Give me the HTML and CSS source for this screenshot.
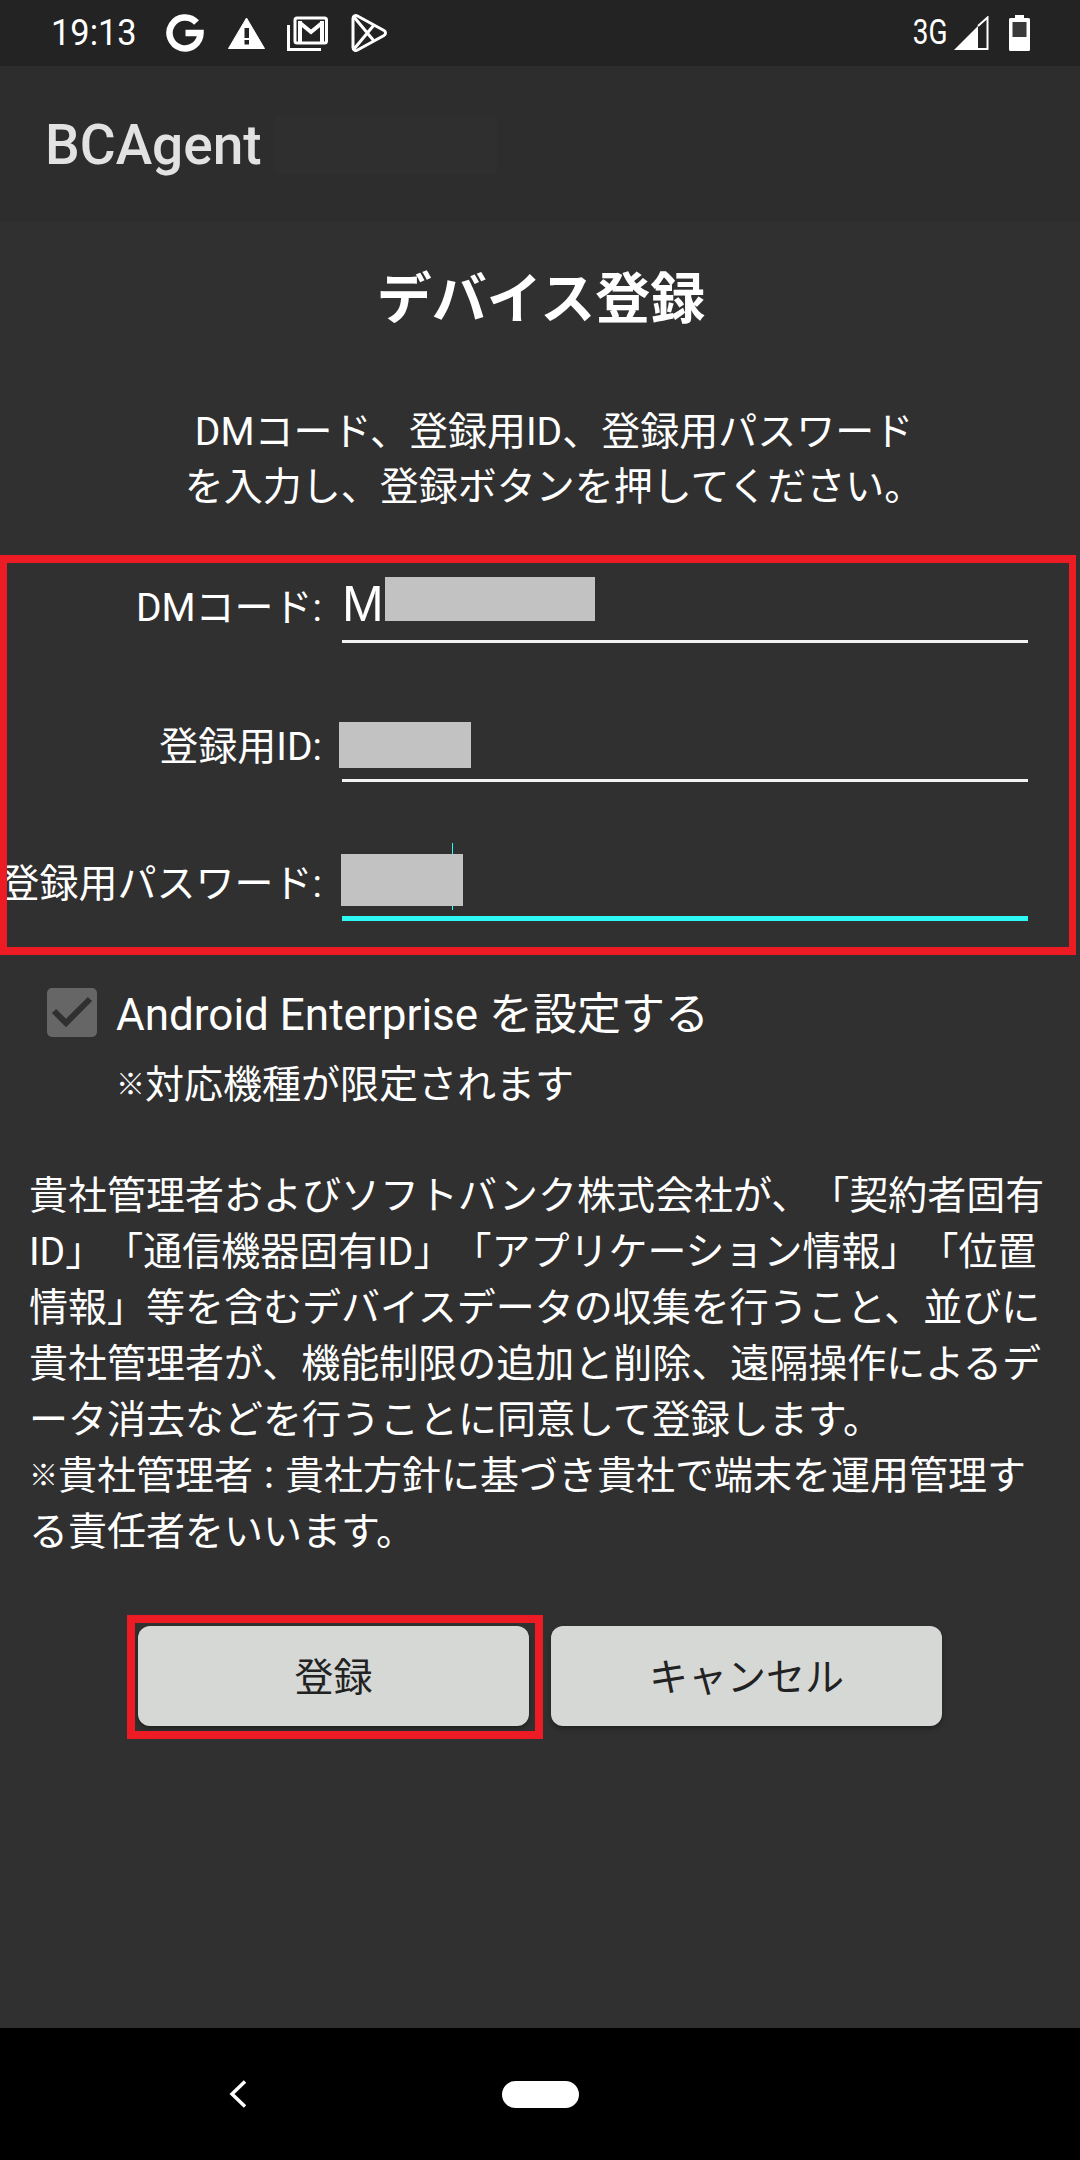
FILE: index.html

```html
<!DOCTYPE html>
<html lang="ja">
<head>
  <meta charset="UTF-8" />
  <title>BCAgent</title>
  <link rel="stylesheet" href="styles.css">
</head>
<body>
  <div class="status-bar">
    <span class="clock">19:13</span>
    <div class="notify-icons">
      <svg class="icon-g" viewBox="0 0 38 38"><path d="M30.500 8.500A15.500 15.500 0 1 0 34.500 19H19.500" fill="none" stroke="#fff" stroke-width="6.500"/></svg>
      <svg class="icon-warn" viewBox="0 0 37 32"><path d="M18.500 1 36.500 31.500H.5z" fill="#fff" stroke="#fff" stroke-linejoin="round"/><rect x="16.500" y="11" width="4.500" height="10" fill="#232323"/><rect x="16.500" y="23" width="4.500" height="4.500" fill="#232323"/></svg>
      <svg class="icon-mail" viewBox="0 0 41 35"><path d="M1.500 9v24.500H34" fill="none" stroke="#fff" stroke-width="3"/><rect x="8" y="2" width="31.500" height="25" rx="2" fill="none" stroke="#fff" stroke-width="3"/><path d="M13 5v21M35 5v21M13 7l11 9 11-9" fill="none" stroke="#fff" stroke-width="4"/></svg>
      <svg class="icon-play" viewBox="0 0 36 38"><path d="M2 4.500C2 2 4.500 1 6.500 2L33 16.500c2 1.100 2 3.900 0 5L6.500 36C4.500 37 2 36 2 33.500z" fill="none" stroke="#fff" stroke-width="3" stroke-linejoin="round"/><path d="M3 3l20 24M3 35L23 11" fill="none" stroke="#fff" stroke-width="3"/></svg>
    </div>
    <div class="system-icons">
      <span class="net-type">3G</span>
      <svg class="icon-signal" viewBox="0 0 35 34"><path d="M0 34 24 10V34z" fill="#fff"/><path d="M24 10 33.500 1.500V33H24" fill="none" stroke="#fff" stroke-width="2"/></svg>
      <svg class="icon-battery" viewBox="0 0 21 36"><path d="M6 0h9v3h4.500a1.500 1.500 0 0 1 1.500 1.500V34.500a1.500 1.500 0 0 1-1.500 1.500H1.500A1.500 1.500 0 0 1 0 34.500V4.500A1.500 1.500 0 0 1 1.500 3H6z" fill="#fff"/><rect x="3.500" y="7" width="14" height="15" fill="#3a3a3a"/></svg>
    </div>
  </div>

  <div class="app-bar">
    <span class="app-name">BCAgent</span>
    <span class="app-ghost"></span>
  </div>

  <div class="content">
    <h1 class="title">デバイス登録</h1>
    <p class="lead">DMコード、登録用ID、登録用パスワード<br>を入力し、登録ボタンを押してください。</p>

    <div class="form-box">
      <div class="field">
        <label>DMコード:</label>
        <div class="input"><span class="input-value">M</span><span class="mask mask-code"></span></div>
      </div>
      <div class="field">
        <label>登録用ID:</label>
        <div class="input"><span class="mask mask-id"></span></div>
      </div>
      <div class="field field-last">
        <label>登録用パスワード:</label>
        <div class="input input-focus"><span class="caret"></span><span class="mask mask-pass"></span></div>
      </div>
    </div>

    <div class="check-row">
      <span class="checkbox">
        <svg viewBox="0 0 50 49"><path d="M7 23 19 35 43 11" fill="none" stroke="#303030" stroke-width="6"/></svg>
      </span>
      <span class="check-label">Android Enterprise を設定する</span>
    </div>
    <p class="check-note"><span class="ref-mark">※</span>対応機種が限定されます</p>

    <p class="terms">貴社管理者およびソフトバンク株式会社が、「契約者固有ID」「通信機器固有ID」「アプリケーション情報」「位置情報」等を含むデバイスデータの収集を行うこと、並びに貴社管理者が、機能制限の追加と削除、遠隔操作によるデータ消去などを行うことに同意して登録します。<br><span class="ref-mark">※</span>貴社管理者<span class="small-colon">：</span>貴社方針に基づき貴社で端末を運用管理する責任者をいいます。</p>

    <div class="actions">
      <button class="btn btn-marked">登録</button>
      <button class="btn">キャンセル</button>
    </div>
  </div>

  <div class="nav-bar">
    <svg class="nav-back" viewBox="0 0 18 28"><path d="M16 1.500 3 14l13 12.500" fill="none" stroke="#fff" stroke-width="3.500"/></svg>
    <span class="nav-home"></span>
  </div>
</body>
</html>
```

FILE: styles.css

```css
* {
  box-sizing: border-box;
}
html, body {
  margin: 0;
  height: 2160px;
}
body {
  display: flex;
  flex-direction: column;
  background: #303030;
  color: #fff;
  font-family: Roboto, "Noto Sans CJK JP", sans-serif;
  text-spacing-trim: space-all;
  overflow: hidden;
}

/* status bar */
.status-bar {
  height: 66px;
  background: #232323;
  display: flex;
  align-items: center;
  padding: 0 50px 0 51px;
}
.clock {
  font-size: 37px;
  line-height: 66px;
  width: 115px;
  transform: scaleX(0.93);
  transform-origin: left center;
}
.notify-icons {
  display: flex;
  align-items: center;
  flex: 1;
}
.notify-icons svg {
  display: block;
}
.icon-g {
  width: 38px;
  height: 38px;
  margin-right: 24px;
}
.icon-warn {
  width: 37px;
  height: 32px;
  margin-right: 22px;
}
.icon-mail {
  width: 41px;
  height: 35px;
  margin-right: 23px;
}
.icon-play {
  width: 36px;
  height: 38px;
}
.system-icons {
  display: flex;
  align-items: center;
}
.net-type {
  font-size: 35px;
  line-height: 66px;
  transform: scaleX(0.8);
  transform-origin: right center;
  margin-right: 6px;
}
.icon-signal {
  width: 35px;
  height: 34px;
  margin-right: 20px;
}
.icon-battery {
  width: 21px;
  height: 36px;
}

/* app bar */
.app-bar {
  height: 156px;
  background: #2d2d2d;
  display: flex;
  align-items: center;
  padding: 2px 0 0 45px;
}
.app-name {
  font-weight: 500;
  font-size: 55px;
  color: #e2e2e2;
  width: 230px;
}
.app-ghost {
  width: 222px;
  height: 57px;
  background: #2f2f2f;
}

/* main */
.content {
  flex: 1;
  position: relative;
}
.title {
  margin: 0;
  height: 154px;
  padding-left: 2px;
  font-size: 55px;
  line-height: 154px;
  font-weight: 700;
  text-align: center;
}
.lead {
  margin: 29px 0 0;
  padding-left: 28px;
  font-size: 39px;
  line-height: 55px;
  text-align: center;
}

.form-box {
  position: relative;
  width: 1076px;
  height: 400px;
  margin-top: 40px;
}
.form-box::after {
  content: "";
  position: absolute;
  inset: 0;
  border-style: solid;
  border-color: #ed1c24;
  border-width: 8px 7px;
}
.field {
  display: flex;
  height: 139px;
}
.field:first-child {
  height: 88px;
}
.field label {
  width: 322px;
  flex: none;
  align-self: flex-end;
  display: flex;
  justify-content: flex-end;
  font-size: 39px;
  line-height: 52px;
  white-space: nowrap;
  margin-bottom: 9px;
}
.field-last label {
  margin-bottom: 11px;
}
.input {
  position: relative;
  margin-left: 20px;
  width: 686px;
  border-bottom: 3px solid #f2f2f2;
  align-self: flex-end;
  height: 70px;
}
.input-focus {
  border-bottom: 5px solid #2cf8f4;
}
.input-value {
  position: absolute;
  left: 0;
  top: -2px;
  font-family: "Liberation Sans", sans-serif;
  font-size: 50px;
  line-height: 66px;
}
.mask {
  position: absolute;
  background: #c2c2c2;
}
.mask-code {
  left: 43px;
  top: 4px;
  width: 210px;
  height: 44px;
}
.mask-id {
  left: -3px;
  top: 10px;
  width: 132px;
  height: 46px;
}
.mask-pass {
  left: -1px;
  top: 3px;
  width: 122px;
  height: 52px;
}
.caret {
  position: absolute;
  left: 110px;
  top: -8px;
  width: 1px;
  height: 67px;
  background: #2cf8f4;
}

.check-row {
  display: flex;
  align-items: center;
  margin: 33px 0 0 47px;
  height: 49px;
}
.checkbox {
  width: 50px;
  height: 49px;
  background: #666;
  border-radius: 5px;
  margin-right: 19px;
}
.checkbox svg {
  display: block;
  width: 50px;
  height: 49px;
}
.check-label {
  padding-top: 6px;
  font-size: 44px;
  line-height: 49px;
}
.check-note {
  margin: 24px 0 0 116px;
  font-size: 39px;
  line-height: 48px;
}
.terms {
  margin: 59px 0 0;
  padding: 0 30px 0 29px;
  font-size: 39px;
  line-height: 56px;
}
/* both set smaller than the text around them in the reference */
.ref-mark {
  font-size: 29px;
  line-height: 1;
  vertical-align: 3px;
}
.small-colon {
  font-size: 32px;
  line-height: 1;
}
.actions {
  position: absolute;
  left: 138px;
  top: 1404px;
  display: flex;
  gap: 22px;
}
.btn {
  width: 391px;
  height: 100px;
  padding: 0 0 5px;
  border: none;
  border-radius: 12px;
  background: #d6d8d6;
  color: #222;
  font-family: inherit;
  font-size: 39px;
  box-shadow: 0 3px 5px rgba(0, 0, 0, 0.3);
}
.btn-marked {
  position: relative;
}
.btn-marked::after {
  content: "";
  position: absolute;
  left: -11px;
  right: -14px;
  top: -11px;
  bottom: -13px;
  border: 8px solid #ed1c24;
}

/* nav bar */
.nav-bar {
  height: 132px;
  background: #000;
  display: flex;
  align-items: center;
  padding-left: 229px;
}
.nav-back {
  width: 18px;
  height: 28px;
  margin-right: 255px;
}
.nav-home {
  width: 77px;
  height: 27px;
  background: #fff;
  border-radius: 14px;
}
```
